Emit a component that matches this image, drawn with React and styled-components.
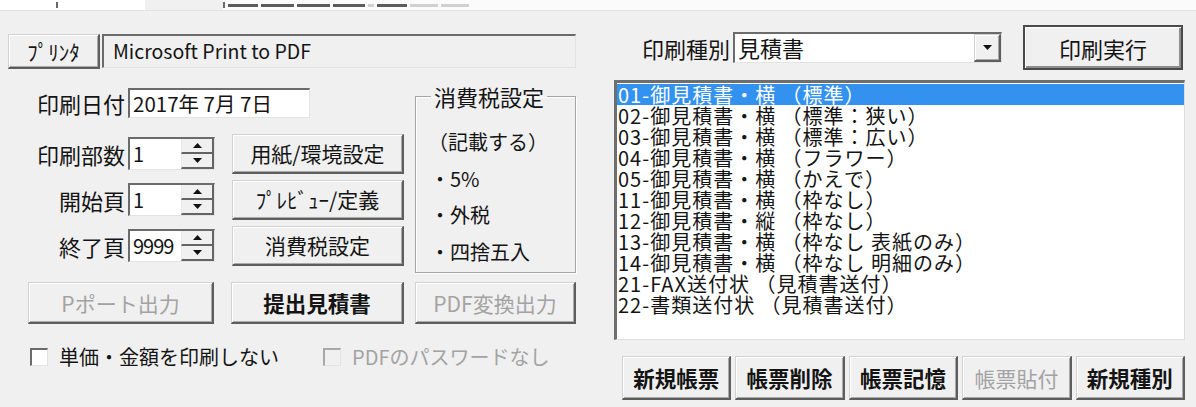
import React from 'react';
import styled, { createGlobalStyle } from 'styled-components';

const GlobalStyle = createGlobalStyle`
  html, body {
    margin: 0;
    padding: 0;
    background: #f0f0f0;
  }
  body {
    font-family: "Noto Sans CJK JP", "Noto Sans", sans-serif;
    color: #141414;
  }
`;

const Window = styled.div`
  width: 1196px;
  height: 407px;
  overflow: hidden;
  background: #f0f0f0;
  display: flex;
  flex-direction: column;
`;

// cropped tab header along the top edge
const TabStrip = styled.div`
  height: 10px;
  display: flex;
  align-items: stretch;
  background: #fbfbfb;
  border-bottom: 1px solid #e2e2e2;
`;

const TabPiece = styled.div`
  width: ${p => p.$w}px;
  flex: ${p => (p.$grow ? 1 : 'none')};
  background: ${p => p.$bg || 'transparent'};
  display: flex;
  align-items: center;
  gap: 3px;
`;

const Tick = styled.span`
  width: 2px;
  height: 6px;
  margin-left: ${p => p.$ml || 0}px;
  background: #6a6a6a;
`;

const Dash = styled.span`
  width: ${p => p.$w}px;
  height: 3px;
  background: ${p => (p.$light ? '#d0d0d0' : '#5c5c5c')};
`;

const Body = styled.div`
  display: flex;
  padding-left: 8px;
`;

const LeftPane = styled.div`
  width: 568px;
  display: flex;
  flex-direction: column;
`;

const RightPane = styled.div`
  width: 571px;
  margin-left: 38px;
  display: flex;
  flex-direction: column;
`;

const raised = `
  background: #f0f0f0;
  border-style: solid;
  border-width: 1px 2px 2px 1px;
  border-color: #d2d2d2 #5e5e5e #5e5e5e #d2d2d2;
  box-shadow: inset 1px 1px 0 #ffffff, inset -1px -1px 0 #a9a9a9;
`;

const sunken = `
  border-style: solid;
  border-width: 2px 1px 1px 2px;
  border-color: #6b6b6b #e3e3e3 #e3e3e3 #6b6b6b;
`;

const Button = styled.button`
  ${raised}
  box-sizing: border-box;
  width: ${p => (p.$w ? `${p.$w}px` : 'auto')};
  height: ${p => p.$h || 40}px;
  margin-left: ${p => p.$ml || 0}px;
  padding: 0;
  font-family: "Noto Sans CJK JP", sans-serif;
  font-size: ${p => (p.$bold ? 21.5 : 21)}px;
  font-weight: ${p => (p.$bold ? 700 : 400)};
  color: ${p => (p.disabled ? '#a3a3a3' : '#141414')};
  display: flex;
  align-items: center;
  justify-content: center;
  white-space: nowrap;
`;

const DefaultButton = styled(Button)`
  border: 2px solid #4a4a4a;
  box-shadow: inset 1px 1px 0 #ffffff, inset -2px -2px 0 #8c8c8c;
  font-size: 22px;
`;

const PrinterRow = styled.div`
  margin-top: 23px;
  display: flex;
  align-items: flex-start;
  gap: 2px;
`;

const ReadField = styled.div`
  ${sunken}
  box-sizing: border-box;
  flex: 1;
  height: 34px;
  background: #f0f0f0;
  padding-left: 9px;
  font-size: 19.5px;
  line-height: 30px;
  white-space: nowrap;
`;

const SettingsArea = styled.div`
  display: flex;
  align-items: flex-start;
  margin-top: 16px;
`;

const FormCol = styled.div`
  display: flex;
  flex-direction: column;
  gap: 3px;
  padding-top: 2px;
`;

const FormRow = styled.div`
  display: grid;
  grid-template-columns: 117px 87px 11px 172px;
  column-gap: 3px;
  align-items: center;
  height: ${p => p.$h}px;
  margin-bottom: ${p => p.$mb || 0}px;
`;

const Label = styled.span`
  grid-column: 1;
  text-align: right;
  font-size: 22px;
  white-space: nowrap;
`;

const TextInput = styled.div`
  ${sunken}
  box-sizing: border-box;
  grid-column: 2 / span 3;
  width: 182px;
  height: 30px;
  background: #fff;
  padding-left: 3px;
  font-size: 20.5px;
  line-height: 26px;
  white-space: nowrap;
`;

const SpinBox = styled.div`
  ${sunken}
  box-sizing: border-box;
  grid-column: 2;
  height: 33px;
  background: #fff;
  display: flex;
`;

const SpinValue = styled.span`
  flex: 1;
  padding-left: 3px;
  font-size: 20px;
  line-height: 29px;
  letter-spacing: -1px;
`;

const Spinner = styled.div`
  width: 33px;
  display: flex;
  flex-direction: column;
`;

const SpinHalf = styled.div`
  flex: 1;
  background: #f0f0f0;
  border-right: 2px solid #646464;
  border-bottom: 2px solid #646464;
  border-left: 1px solid #e8e8e8;
  display: flex;
  align-items: center;
  justify-content: center;
`;

const SideButton = styled(Button)`
  grid-column: 4;
`;

const GroupBox = styled.fieldset`
  box-sizing: border-box;
  width: 161px;
  height: 188px;
  margin: 0 0 0 11px;
  padding: 17px 0 0 12px;
  border: 1px solid #a5a5a5;
  box-shadow: 1px 1px 0 #ffffff, inset 1px 1px 0 #ffffff;
  display: flex;
  flex-direction: column;
`;

const Legend = styled.legend`
  padding: 0 3px;
  margin-left: 3px;
  font-size: 22px;
  line-height: 22px;
`;

const GroupLine = styled.div`
  font-size: 20px;
  line-height: 36.5px;
  margin-left: ${p => p.$indent || 0}px;
  white-space: nowrap;
`;

const ActionRow = styled.div`
  display: flex;
  margin-top: 9px;
  padding-left: 20px;
`;

const CheckRow = styled.div`
  display: flex;
  align-items: center;
  margin-top: 18px;
  padding-left: 22px;
`;

const CheckItem = styled.label`
  display: flex;
  align-items: center;
  gap: 11px;
  margin-right: ${p => p.$mr || 0}px;
  font-size: 20px;
  color: ${p => (p.$disabled ? '#a3a3a3' : '#141414')};
  white-space: nowrap;
`;

const CheckBox = styled.span`
  ${sunken}
  box-sizing: border-box;
  width: 18px;
  height: 18px;
  background: ${p => (p.$disabled ? '#f0f0f0' : '#fff')};
  border-color: ${p => (p.$disabled ? '#a8a8a8 #e3e3e3 #e3e3e3 #a8a8a8' : '#6b6b6b #e3e3e3 #e3e3e3 #6b6b6b')};
`;

const KindRow = styled.div`
  margin-top: 14px;
  height: 45px;
  display: flex;
  align-items: center;
`;

const KindLabel = styled.span`
  width: 116px;
  text-align: right;
  font-size: 22px;
  white-space: nowrap;
`;

const Combo = styled.div`
  ${sunken}
  box-sizing: border-box;
  width: 269px;
  height: 31px;
  margin-left: 3px;
  background: #fff;
  display: flex;
`;

const ComboText = styled.span`
  flex: 1;
  padding-left: 3px;
  font-size: 22px;
  line-height: 27px;
`;

const ComboArrow = styled.div`
  ${raised}
  width: 24px;
  display: flex;
  align-items: center;
  justify-content: center;
`;

const ListBox = styled.div`
  ${sunken}
  border-width: 3px 1px 1px 3px;
  border-color: #6e6e6e #dedede #dedede #6e6e6e;
  box-sizing: border-box;
  margin-top: 10px;
  height: 260px;
  background: #fff;
  padding-top: 1px;
  overflow: hidden;
`;

const ListItem = styled.div`
  height: 21px;
  padding-left: 1px;
  font-size: 20px;
  line-height: 21px;
  letter-spacing: 1px;
  white-space: nowrap;
  background: ${p => (p.$selected ? '#3391f0' : 'transparent')};
  color: ${p => (p.$selected ? '#ffffff' : '#141414')};
`;

const BottomBar = styled.div`
  margin-top: 16px;
  padding-left: 8px;
  display: flex;
  gap: 4px;
`;

const BarButton = styled(Button)`
  flex: 1;
`;

const Tri = ({ down }) => (
  <svg width="9" height="5" viewBox="0 0 9 5">
    <polygon points={down ? '0,0 9,0 4.5,5' : '0,5 9,5 4.5,0'} fill="#111" />
  </svg>
);

const Spin = ({ value }) => (
  <SpinBox>
    <SpinValue>{value}</SpinValue>
    <Spinner>
      <SpinHalf><Tri /></SpinHalf>
      <SpinHalf><Tri down /></SpinHalf>
    </Spinner>
  </SpinBox>
);

const reports = [
  '01-御見積書・横 （標準）',
  '02-御見積書・横 （標準：狭い）',
  '03-御見積書・横 （標準：広い）',
  '04-御見積書・横 （フラワー）',
  '05-御見積書・横 （かえで）',
  '11-御見積書・横 （枠なし）',
  '12-御見積書・縦 （枠なし）',
  '13-御見積書・横 （枠なし 表紙のみ）',
  '14-御見積書・横 （枠なし 明細のみ）',
  '21-FAX送付状 （見積書送付）',
  '22-書類送付状 （見積書送付）',
];

const spinRows = [
  { label: '印刷部数', value: '1', button: '用紙/環境設定' },
  { label: '開始頁', value: '1', button: 'ﾌﾟﾚﾋﾞｭｰ/定義' },
  { label: '終了頁', value: '9999', button: '消費税設定' },
];

export default function App() {
  return (
    <Window>
      <GlobalStyle />
      <TabStrip>
        <TabPiece $w={145} $bg="#ffffff">
          <Tick $ml={56} />
        </TabPiece>
        <TabPiece $w={78} $bg="#f0f0f0" />
        <TabPiece $grow>
          <Tick />
          <Dash $w={30} />
          <Dash $w={33} />
          <Dash $w={33} />
          <Dash $w={32} />
          <Dash $w={6} $light />
          <Dash $w={30} />
          <Dash $w={28} $light />
          <Dash $w={28} $light />
        </TabPiece>
      </TabStrip>
      <Body>
        <LeftPane>
          <PrinterRow>
            <Button $w={92} $h={35}>ﾌﾟﾘﾝﾀ</Button>
            <ReadField>Microsoft Print to PDF</ReadField>
          </PrinterRow>

          <SettingsArea>
            <FormCol>
              <FormRow $h={30} $mb={12}>
                <Label>印刷日付</Label>
                <TextInput>2017年 7月 7日</TextInput>
              </FormRow>
              {spinRows.map(r => (
                <FormRow key={r.label} $h={43}>
                  <Label>{r.label}</Label>
                  <Spin value={r.value} />
                  <SideButton $w={172} $h={40}>{r.button}</SideButton>
                </FormRow>
              ))}
            </FormCol>
            <GroupBox>
              <Legend>消費税設定</Legend>
              <GroupLine>（記載する）</GroupLine>
              <GroupLine $indent={2}>・5%</GroupLine>
              <GroupLine $indent={2}>・外税</GroupLine>
              <GroupLine $indent={2}>・四捨五入</GroupLine>
            </GroupBox>
          </SettingsArea>

          <ActionRow>
            <Button $w={186} $h={42} disabled>Pポート出力</Button>
            <Button $w={173} $h={42} $ml={17} $bold>提出見積書</Button>
            <Button $w={161} $h={42} $ml={11} disabled>PDF変換出力</Button>
          </ActionRow>

          <CheckRow>
            <CheckItem $mr={44}>
              <CheckBox />
              単価・金額を印刷しない
            </CheckItem>
            <CheckItem $disabled>
              <CheckBox $disabled />
              PDFのパスワードなし
            </CheckItem>
          </CheckRow>
        </LeftPane>

        <RightPane>
          <KindRow>
            <KindLabel>印刷種別</KindLabel>
            <Combo>
              <ComboText>見積書</ComboText>
              <ComboArrow><Tri down /></ComboArrow>
            </Combo>
            <DefaultButton $w={160} $h={45} $ml={21}>印刷実行</DefaultButton>
          </KindRow>

          <ListBox>
            {reports.map((r, i) => (
              <ListItem key={r} $selected={i === 0}>{r}</ListItem>
            ))}
          </ListBox>

          <BottomBar>
            <BarButton $h={44} $bold>新規帳票</BarButton>
            <BarButton $h={44} $bold>帳票削除</BarButton>
            <BarButton $h={44} $bold>帳票記憶</BarButton>
            <BarButton $h={44} disabled>帳票貼付</BarButton>
            <BarButton $h={44} $bold>新規種別</BarButton>
          </BottomBar>
        </RightPane>
      </Body>
    </Window>
  );
}
